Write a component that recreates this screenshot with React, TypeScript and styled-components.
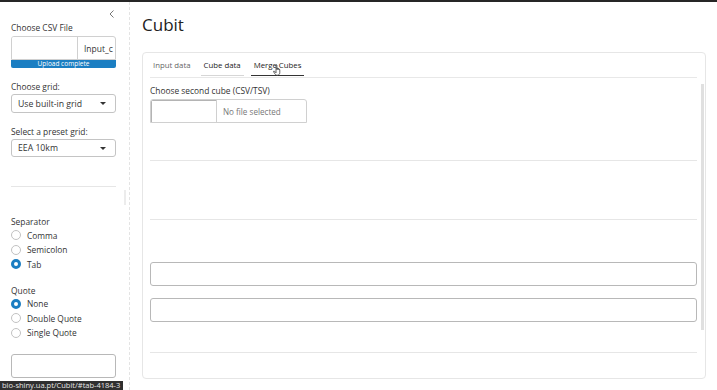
import React from 'react'
import styled, { createGlobalStyle } from 'styled-components'

const GlobalStyle = createGlobalStyle`
	html, body {
		margin: 0;
		padding: 0;
		background: #fff;
		font-family: "Open Sans", "Liberation Sans", sans-serif;
		color: #333;
	}
	* { box-sizing: border-box; }
`

const Page = styled.div`
	width: 717px;
	height: 390px;
	position: relative;
	overflow: hidden;
	border-top: 2px solid #262626;
	display: flex;
`

const Sidebar = styled.aside`
	width: 130px;
	flex: none;
	position: relative;
	border-right: 1px dashed #e4e4e4;
	padding: 0 13px 0 11px;
	display: flex;
	flex-direction: column;
`

const SideThumb = styled.div`
	position: absolute;
	right: 3px;
	top: 188px;
	width: 2px;
	height: 15px;
	background: #ececec;
`

const CollapseRow = styled.div`
	height: 20px;
	display: flex;
	justify-content: flex-end;
	align-items: center;
	padding-top: 4px;
	color: #777;
`

const Label = styled.div<{ $top?: number }>`
	font-size: 8.4px;
	line-height: 12px;
	margin-top: ${p => p.$top ?? 0}px;
	white-space: nowrap;
	color: #333;
`

const FileBox = styled.div<{ $top?: number; $width?: string }>`
	display: flex;
	height: 24px;
	margin-top: ${p => p.$top ?? 0}px;
	width: ${p => p.$width ?? '100%'};
	border: 1px solid #d0d0d0;
	border-radius: 3px 3px 0 0;
	overflow: hidden;
	background: #fff;
`

const BrowseButton = styled.div<{ $width: number; $inset?: boolean }>`
	width: ${p => p.$width}px;
	flex: none;
	border-right: 1px solid #d0d0d0;
	background: #fff;
	box-shadow: ${p => (p.$inset ? 'inset 1px 1px 0 #b4b4b4' : 'none')};
`

const FileName = styled.div<{ $muted?: boolean }>`
	flex: 1;
	display: flex;
	align-items: center;
	padding-left: 6px;
	font-size: ${p => (p.$muted ? 8.1 : 8.5)}px;
	color: ${p => (p.$muted ? '#777' : '#333')};
	white-space: nowrap;
	overflow: hidden;
`

const Progress = styled.div`
	height: 8px;
	background: #1b7ec2;
	color: #fff;
	font-size: 6.5px;
	line-height: 8px;
	text-align: center;
	border-radius: 0 0 2px 2px;
`

const Select = styled.div<{ $top?: number; $height: number }>`
	margin-top: ${p => p.$top ?? 0}px;
	height: ${p => p.$height}px;
	border: 1px solid #c4c4c4;
	border-radius: 3px;
	display: flex;
	align-items: center;
	justify-content: space-between;
	padding: 0 9px 0 6px;
	font-size: 8.7px;
	color: #333;
`

const Caret = styled.span`
	width: 0;
	height: 0;
	border-left: 3px solid transparent;
	border-right: 3px solid transparent;
	border-top: 3px solid #333;
`

const Rule = styled.hr<{ $top: number }>`
	margin: ${p => p.$top}px 0 0;
	border: 0;
	border-top: 1px solid #e6e6e6;
	height: 0;
`

const RadioGroup = styled.div`
	display: flex;
	flex-direction: column;
`

const RadioRow = styled.label`
	height: 14.5px;
	display: flex;
	align-items: center;
	gap: 6px;
	font-size: 8.4px;
	color: #333;
	white-space: nowrap;
`

const RadioDot = styled.span<{ $on?: boolean }>`
	width: 10px;
	height: 10px;
	border-radius: 50%;
	flex: none;
	background: #fff;
	border: ${p => (p.$on ? '3px solid #1b7ec2' : '1px solid #c2c2c2')};
`

const TextBox = styled.div<{ $top?: number }>`
	margin-top: ${p => p.$top ?? 0}px;
	height: 24px;
	border: 1px solid #b8b8b8;
	border-radius: 3px;
	background: #fff;
`

const Main = styled.main`
	flex: 1;
	min-width: 0;
	padding: 0 11px 0 12px;
	display: flex;
	flex-direction: column;
`

const Title = styled.h1`
	margin: 11px 0 0;
	font-size: 17px;
	line-height: 24px;
	font-weight: 400;
	color: #222;
`

const Card = styled.section`
	margin-top: 15px;
	height: 327px;
	border: 1px solid #e6e6e6;
	border-radius: 4px;
	display: flex;
	flex-direction: column;
	overflow: hidden;
	position: relative;
`

const TabNav = styled.nav`
	display: flex;
	gap: 7px;
	margin: 0 8px 0 7px;
	padding-top: 2px;
	height: 25px;
	border-bottom: 1px solid #e8e8e8;
`

const Tab = styled.div<{ $state: 'active' | 'hover' | 'idle' }>`
	padding: 0 3px;
	height: 21px;
	display: flex;
	align-items: center;
	font-size: 7.8px;
	color: ${p => (p.$state === 'idle' ? '#666' : '#222')};
	border-bottom: ${p =>
		p.$state === 'active' ? '1.5px solid #333' : p.$state === 'hover' ? '1px solid #d6d6d6' : '1px solid transparent'};
	white-space: nowrap;
	position: relative;
`

const Pane = styled.div`
	flex: 1;
	overflow: hidden;
	padding: 0 8px 0 7px;
	display: flex;
	flex-direction: column;
`

const PaneThumb = styled.div`
	position: absolute;
	right: 1px;
	top: 31px;
	width: 3px;
	height: 246px;
	background: #e0e0e0;
`

const StatusBar = styled.div`
	position: absolute;
	left: 0;
	bottom: 0;
	height: 9px;
	padding: 0 3px 0 2px;
	background: #2f2f2f;
	color: #e6e6e6;
	font-size: 7.5px;
	line-height: 9px;
	white-space: nowrap;
`

const Pointer = styled.svg`
	position: absolute;
	left: 22px;
	top: 9px;
`

function ChevronLeft() {
	return (
		<svg width="8" height="10" viewBox="0 0 8 10">
			<polyline points="5.5,1.5 2,5 5.5,8.5" fill="none" stroke="#777" strokeWidth="1" />
		</svg>
	)
}

function Hand() {
	return (
		<Pointer width="9" height="12" viewBox="0 0 9 12">
			<path
				d="M3 1.2c0-.6.9-.6.9 0v4.3l.1-1c0-.6.9-.6.9 0v1l.1-.6c0-.6.9-.6.9 0v.9c0-.5.9-.5.9 0v2.8c0 1.4-.9 2.6-2.2 2.6H3.9C2.9 11.2 2.3 10.4 1.7 9.6L.6 7.7c-.3-.5.4-1 .8-.5l1.6 1.6z"
				fill="#fff"
				stroke="#222"
				strokeWidth="0.7"
			/>
		</Pointer>
	)
}

export default function App() {
	return (
		<>
			<GlobalStyle />
			<Page>
				<Sidebar>
					<CollapseRow>
						<ChevronLeft />
					</CollapseRow>
					<Label>Choose CSV File</Label>
					<FileBox $top={2}>
						<BrowseButton $width={66} />
						<FileName>Input_c</FileName>
					</FileBox>
					<Progress>Upload complete</Progress>

					<Label $top={13}>Choose grid:</Label>
					<Select $top={1} $height={19}>
						<span>Use built-in grid</span>
						<Caret />
					</Select>

					<Label $top={13}>Select a preset grid:</Label>
					<Select $top={1} $height={18}>
						<span>EEA 10km</span>
						<Caret />
					</Select>

					<Rule $top={29} />

					<Label $top={29}>Separator</Label>
					<RadioGroup>
						<RadioRow><RadioDot />Comma</RadioRow>
						<RadioRow><RadioDot />Semicolon</RadioRow>
						<RadioRow><RadioDot $on />Tab</RadioRow>
					</RadioGroup>

					<Label $top={13}>Quote</Label>
					<RadioGroup>
						<RadioRow><RadioDot $on />None</RadioRow>
						<RadioRow><RadioDot />Double Quote</RadioRow>
						<RadioRow><RadioDot />Single Quote</RadioRow>
					</RadioGroup>

					<TextBox $top={14} />
					<SideThumb />
				</Sidebar>

				<Main>
					<Title>Cubit</Title>
					<Card>
						<TabNav>
							<Tab $state="idle">Input data</Tab>
							<Tab $state="hover">Cube data</Tab>
							<Tab $state="active">
								Merge Cubes
								<Hand />
							</Tab>
						</TabNav>
						<Pane>
							<Label $top={7}>Choose second cube (CSV/TSV)</Label>
							<FileBox $top={2} $width="157px">
								<BrowseButton $width={66} $inset />
								<FileName $muted>No file selected</FileName>
							</FileBox>
							<Rule $top={37} />
							<Rule $top={58} />
							<TextBox $top={42} />
							<TextBox $top={12} />
							<Rule $top={30} />
						</Pane>
						<PaneThumb />
					</Card>
				</Main>

				<StatusBar>bio-shiny.ua.pt/Cubit/#tab-4184-3</StatusBar>
			</Page>
		</>
	)
}
